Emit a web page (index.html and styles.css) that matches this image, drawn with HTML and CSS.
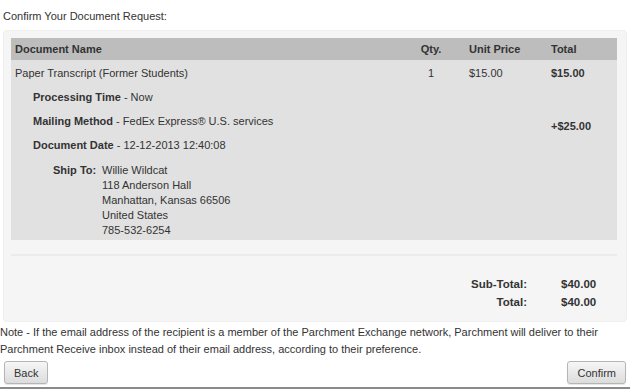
FILE: index.html
```html
<!DOCTYPE html>
<html lang="en">
<head>
    <meta charset="UTF-8">
    <title>Confirm Your Document Request</title>
    <link rel="stylesheet" href="styles.css">
</head>
<body>
    <div class="page">
        <p class="title">Confirm Your Document Request:</p>

        <div class="well">
            <table class="order">
                <thead>
                    <tr>
                        <th class="col-name">Document Name</th>
                        <th class="col-qty">Qty.</th>
                        <th class="col-price">Unit Price</th>
                        <th class="col-total">Total</th>
                    </tr>
                </thead>
                <tbody>
                    <tr class="item">
                        <td class="col-name">Paper Transcript (Former Students)</td>
                        <td class="col-qty">1</td>
                        <td class="col-price">$15.00</td>
                        <td class="col-total"><b>$15.00</b></td>
                    </tr>
                    <tr class="detail">
                        <td class="col-name"><b>Processing Time</b> - Now</td>
                        <td></td><td></td><td></td>
                    </tr>
                    <tr class="detail">
                        <td class="col-name"><b>Mailing Method</b> - FedEx Express® U.S. services</td>
                        <td></td><td></td>
                        <td class="col-total fee"><b>+$25.00</b></td>
                    </tr>
                    <tr class="detail">
                        <td class="col-name"><b>Document Date</b> - 12-12-2013 12:40:08</td>
                        <td></td><td></td><td></td>
                    </tr>
                    <tr class="ship">
                        <td class="col-name">
                            <div class="ship-to">
                                <span class="ship-label">Ship To:</span>
                                <div class="address">
                                    Willie Wildcat<br>
                                    118 Anderson Hall<br>
                                    Manhattan, Kansas 66506<br>
                                    United States<br>
                                    785-532-6254
                                </div>
                            </div>
                        </td>
                        <td></td><td></td><td></td>
                    </tr>
                </tbody>
            </table>

            <hr class="divider">

            <div class="sums">
                <div class="sum-row">
                    <span class="sum-label">Sub-Total:</span>
                    <span class="sum-value">$40.00</span>
                </div>
                <div class="sum-row">
                    <span class="sum-label">Total:</span>
                    <span class="sum-value">$40.00</span>
                </div>
            </div>
        </div>

        <p class="note">Note - If the email address of the recipient is a member of the Parchment Exchange network, Parchment will deliver to their Parchment Receive inbox instead of their email address, according to their preference.</p>

        <div class="actions">
            <button type="button" class="btn">Back</button>
            <button type="button" class="btn">Confirm</button>
        </div>
    </div>
</body>
</html>
```

FILE: styles.css
```css
body {
    font-family: Arial, "Liberation Sans", sans-serif;
    font-size: 11px;
    color: #333;
    background-color: #fff;
    margin: 0;
    padding: 0;
}
.page {
    width: 630px;
    height: 387px;
    border-bottom: 2px solid #8a8a8a;
}
.title {
    margin: 0;
    padding: 9px 3px 0;
    line-height: 14px;
    height: 21px;
}
.well {
    margin: 0 3px 0 3px;
    padding: 7px 9px 0 7px;
    height: 283px;
    background-color: #f5f5f5;
    border: 1px solid #efefef;
    border-radius: 4px;
}
.order {
    width: 606px;
    border-collapse: collapse;
    table-layout: fixed;
    background-color: #e1e1e1;
}
.order th {
    background-color: #bdbdbd;
    text-align: left;
    font-weight: bold;
    height: 22px;
    padding: 0 4px;
}
.order td {
    padding: 0 4px;
    vertical-align: middle;
    line-height: 14px;
}
.col-name {
    width: 394px;
}
.order .col-qty {
    width: 28px;
    text-align: center;
}
.order .col-price {
    width: 74px;
    padding-left: 20px;
}
.order .col-total {
    width: 62px;
}
.item td {
    height: 25px;
}
.detail td {
    height: 24px;
}
.detail .col-name {
    padding-left: 22px;
}
.detail .fee {
    vertical-align: bottom;
}
.ship td {
    padding-top: 6px;
    padding-bottom: 2px;
}
.ship-to {
    display: flex;
    padding-left: 38px;
    line-height: 15px;
}
.ship-label {
    font-weight: bold;
    width: 49px;
}
.divider {
    border: 0;
    height: 2px;
    background-color: #ebebeb;
    margin: 14px 0 0;
    width: 606px;
}
.sums {
    padding-top: 19px;
    width: 606px;
}
.sum-row {
    display: flex;
    font-size: 11.5px;
    font-weight: bold;
    line-height: 18px;
}
.sum-label {
    width: 516px;
    text-align: right;
}
.sum-value {
    padding-left: 34px;
}
.note {
    margin: 0;
    padding: 2px 0 0 0;
    line-height: 17px;
}
.actions {
    display: flex;
    justify-content: space-between;
    padding: 3px 4px 0 4px;
}
.btn {
    font-family: Arial, "Liberation Sans", sans-serif;
    font-size: 11px;
    color: #333;
    height: 23px;
    padding: 0 9px;
    background: linear-gradient(#f6f6f6, #dcdcdc);
    border: 1px solid #b5b5b5;
    border-radius: 3px;
    box-shadow: 0 1px 1px rgba(0, 0, 0, 0.1);
    cursor: pointer;
}
```
